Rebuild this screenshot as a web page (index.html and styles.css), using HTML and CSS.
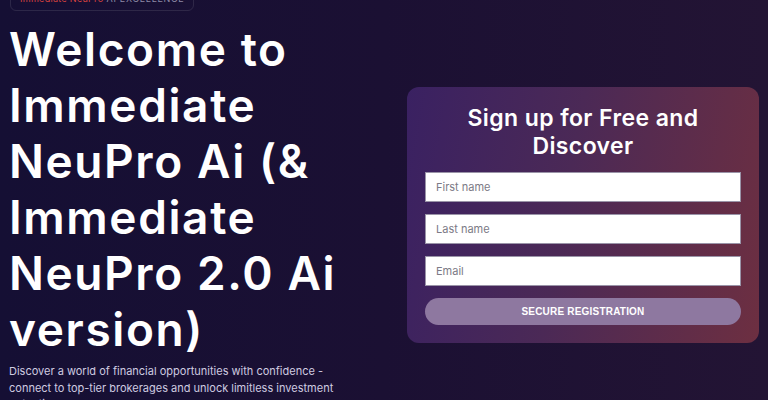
FILE: index.html
```html
<!DOCTYPE html>
<html lang="en">
<head>
  <meta charset="UTF-8">
  <meta name="viewport" content="width=device-width, initial-scale=1.0">
  <title>Immediate NeuPro Ai</title>
  <link rel="stylesheet" href="styles.css">
</head>
<body>
  <section class="hero">
    <div class="hero-text">
      <div class="badge"><span class="badge-brand">Immediate NeuPro</span> AI EXCELLENCE</div>
      <h1>Welcome to Immediate NeuPro Ai (&amp; Immediate NeuPro 2.0 Ai version)</h1>
      <p>Discover a world of financial opportunities with confidence - connect to top-tier brokerages and unlock limitless investment potential.</p>
    </div>

    <form class="signup" onsubmit="return false;">
      <h2>Sign up for Free and Discover</h2>
      <input type="text" placeholder="First name">
      <input type="text" placeholder="Last name">
      <input type="email" placeholder="Email">
      <button type="submit">SECURE REGISTRATION</button>
    </form>
  </section>
</body>
</html>
```

FILE: styles.css
```css
body, html {
  margin: 0;
  padding: 0;
  height: 100%;
  overflow: hidden;
  font-family: Inter, "Noto Sans", sans-serif;
  background: linear-gradient(90deg, #150f34 0%, #1b1033 50%, #231434 100%);
  color: #fff;
}
.hero {
  display: flex;
  justify-content: space-between;
  align-items: flex-start;
  padding: 0 9px;
}
.hero-text {
  width: 345px;
  display: flex;
  flex-direction: column;
  align-items: flex-start;
}
.badge {
  margin-top: -12px;
  margin-left: 1px;
  padding: 4px 9px 6px;
  border: 1px solid rgba(255, 255, 255, 0.1);
  border-radius: 6px;
  font-size: 9px;
  line-height: 11px;
  letter-spacing: 0.7px;
  color: #8e8aa6;
}
.badge-brand {
  color: #d9433f;
  letter-spacing: 0.3px;
}
.hero-text h1 {
  margin: 10px 0 0;
  font-size: 46px;
  line-height: 56px;
  font-weight: 600;
  letter-spacing: 1.6px;
}
.hero-text p {
  margin: 6px 0 0;
  font-size: 11px;
  line-height: 16.5px;
  color: #cfcbe0;
}
.signup {
  width: 352px;
  margin-top: 87px;
  padding: 17px 18px 18px;
  box-sizing: border-box;
  display: flex;
  flex-direction: column;
  gap: 12px;
  border-radius: 12px;
  background: linear-gradient(100deg, #3a2162 0%, #4b2956 45%, #6d2f41 100%);
}
.signup h2 {
  margin: 0;
  text-align: center;
  font-size: 23px;
  line-height: 28px;
  font-weight: 600;
  letter-spacing: 0.4px;
}
.signup input {
  height: 30px;
  padding: 0 10px;
  box-sizing: border-box;
  border: 1px solid #9a94a8;
  background: #fff;
  font-family: Inter, sans-serif;
  font-size: 11px;
  color: #333;
}
.signup input::placeholder {
  color: #7c7a86;
}
.signup button {
  height: 27px;
  border: none;
  border-radius: 14px;
  background: #8e78a0;
  color: #fff;
  font-family: "Liberation Sans", Arial, sans-serif;
  font-size: 10px;
  font-weight: bold;
  letter-spacing: 0.2px;
  cursor: pointer;
}
```
